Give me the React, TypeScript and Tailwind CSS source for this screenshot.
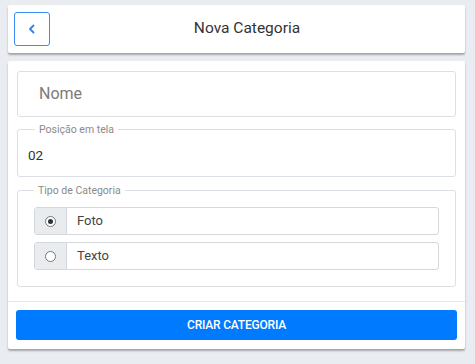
import React from "react";

export default function App() {
  return (
    <div className="w-[475px] h-[364px] bg-[#e9ecf1] pt-[5px] pl-[8px] pr-[10px]" style={{ fontFamily: "Roboto, 'Liberation Sans', sans-serif" }}>
      <div className="h-[48px] bg-white rounded-[2px] shadow-[0_2px_2px_rgba(0,0,0,0.3)] flex items-center pl-[6px] relative">
        <button className="w-[36px] h-[34px] border border-[#3b8cf5] rounded-[3px] flex items-center justify-center text-[#2f7ff0]">
          <svg width="10" height="12" viewBox="0 0 10 12" fill="none">
            <path d="M6.5 2.5L3 6l3.5 3.5" stroke="currentColor" strokeWidth="1.8" strokeLinecap="round" strokeLinejoin="round" />
          </svg>
        </button>
        <div className="absolute inset-0 flex items-center justify-center pointer-events-none">
          <span className="text-[15.5px] text-[#333] ml-[21px]">Nova Categoria</span>
        </div>
      </div>
      <div className="mt-[8px] bg-white rounded-[2px] shadow-[0_2px_2px_rgba(0,0,0,0.3)] h-[288px] flex flex-col">
        <div className="px-[9px] pt-[10px]">
          <div className="h-[46px] border border-[#dcdfe3] rounded-[3px] flex items-center px-[21px] text-[16px] text-[#7a7a7a]">Nome</div>
          <fieldset className="mt-[6px] h-[54px] border border-[#dcdfe3] rounded-[3px] px-[10px]">
            <legend className="ml-[7px] px-[4px] text-[10.5px] text-[#8a8a8a] leading-[13px]">Posição em tela</legend>
            <div className="text-[13.5px] text-[#333] mt-[9px]">02</div>
          </fieldset>
          <fieldset className="mt-[7px] h-[103px] border border-[#dcdfe3] rounded-[3px] px-[16px]">
            <legend className="ml-[0px] px-[4px] text-[10.5px] text-[#8a8a8a] leading-[13px]">Tipo de Categoria</legend>
            <div className="mt-[10px] flex flex-col gap-[7px]">
              {[
                { label: "Foto", checked: true },
                { label: "Texto", checked: false },
              ].map((r) => (
                <div key={r.label} className="h-[28px] flex border border-[#d4d8dd] rounded-[3px] overflow-hidden">
                  <div className="w-[32px] bg-[#e9ecef] border-r border-[#d4d8dd] flex items-center justify-center">
                    <span className="w-[11px] h-[11px] rounded-full border border-[#777] bg-white flex items-center justify-center">
                      {r.checked && <span className="w-[5px] h-[5px] rounded-full bg-[#333]" />}
                    </span>
                  </div>
                  <div className="flex-1 flex items-center pl-[10px] text-[13px] text-[#444]">{r.label}</div>
                </div>
              ))}
            </div>
          </fieldset>
        </div>
        <div className="mt-[14px] border-t border-[#e6e8eb]" />
        <div className="px-[8px] pt-[8px]">
          <button className="w-full h-[30px] bg-[#007bff] rounded-[3px] text-white text-[12px] font-medium flex items-center justify-center tracking-[-0.2px]">
            CRIAR CATEGORIA
          </button>
        </div>
      </div>
    </div>
  );
}
